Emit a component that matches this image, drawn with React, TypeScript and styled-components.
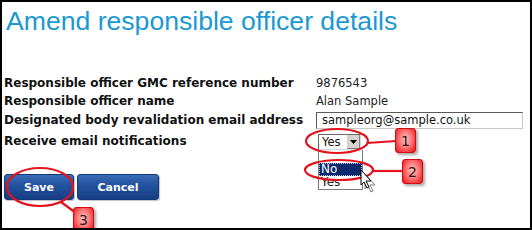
import React from 'react'
import styled, { createGlobalStyle } from 'styled-components'

const GlobalStyle = createGlobalStyle`
	html, body {
		margin: 0;
		padding: 0;
		background: #fff;
	}
	body {
		font-family: 'DejaVu Sans', Verdana, sans-serif;
	}
`

const Frame = styled.div`
	position: relative;
	width: 532px;
	height: 230px;
	box-sizing: border-box;
	border: 2px solid #000;
	overflow: hidden;
	background: #fff;
`

const Title = styled.h1`
	margin: 0;
	padding: 4px 0 0 4px;
	font-family: 'Liberation Sans', Arial, sans-serif;
	font-weight: normal;
	font-size: 26.6px;
	line-height: 30px;
	color: #1c98d4;
`

const Form = styled.div`
	display: grid;
	grid-template-columns: 312px 207px;
	grid-template-rows: 17px 18px 21px 21px;
	align-items: center;
	margin-top: 39px;
	padding-left: 2px;
`

const Label = styled.div`
	font-weight: bold;
	font-size: 12px;
	line-height: 17px;
	color: #111;
	white-space: nowrap;
`

const Value = styled.div`
	font-size: 11.5px;
	line-height: 17px;
	color: #222;
`

const TextInput = styled.div`
	box-sizing: border-box;
	height: 17px;
	padding: 0 0 0 5px;
	border: 1px solid;
	border-color: #5a5a5a #c8c8c8 #c8c8c8 #5a5a5a;
	font-size: 11.5px;
	line-height: 15px;
	color: #111;
`

const SelectWrap = styled.div`
	position: relative;
	margin-left: 2px;
	width: 43px;
`

const SelectBox = styled.div`
	box-sizing: border-box;
	display: flex;
	align-items: stretch;
	height: 16px;
	border: 1px solid;
	border-color: #6a6a6a #d8d8d8 #d8d8d8 #6a6a6a;
	background: #fff;
`

const SelectText = styled.span`
	flex: 1;
	padding-left: 3px;
	font-size: 11.5px;
	line-height: 14px;
	color: #111;
`

const ArrowButton = styled.span`
	width: 13px;
	display: flex;
	align-items: center;
	justify-content: center;
	background: #d6d3cc;
	border-left: 1px solid #fff;
	box-shadow: inset -1px -1px 0 #808080;
`

const ListBox = styled.div`
	position: absolute;
	top: 16px;
	left: 0;
	width: 45px;
	box-sizing: border-box;
	border: 1px solid #7a7a7a;
	border-top: 0;
	background: #fff;
	padding-top: 13px;
`

const Option = styled.div<{ $active?: boolean }>`
	box-sizing: border-box;
	height: 13px;
	padding-left: 2px;
	font-size: 12px;
	line-height: 12px;
	color: ${(p) => (p.$active ? '#fff' : '#222')};
	background: ${(p) => (p.$active ? '#0b2a6e' : 'transparent')};
	outline: ${(p) => (p.$active ? '1px dotted #b9c4e0' : 'none')};
	outline-offset: -1px;
`

const Actions = styled.div`
	display: flex;
	gap: 3px;
	margin-top: 22px;
	padding-left: 2px;
`

const Button = styled.button<{ $width: number }>`
	width: ${(p) => p.$width}px;
	height: 26px;
	border: 1px solid #123a7a;
	border-radius: 3px;
	background: linear-gradient(#3a6bb6 0%, #21519d 45%, #173f86 100%);
	color: #fff;
	font-family: 'DejaVu Sans', Verdana, sans-serif;
	font-weight: bold;
	font-size: 11px;
	padding: 0;
	box-shadow: 1px 1px 1px rgba(0, 0, 0, 0.25);
`

const Overlay = styled.div`
	position: absolute;
	top: -2px;
	left: -2px;
	width: 532px;
	height: 230px;
	pointer-events: none;
`

const Marks = styled.svg`
	position: absolute;
	top: 0;
	left: 0;
`

const Badge = styled.div<{ $x: number; $y: number }>`
	position: absolute;
	left: ${(p) => p.$x}px;
	top: ${(p) => p.$y}px;
	width: 21px;
	height: 25px;
	box-sizing: border-box;
	border: 1px solid #d20a12;
	border-radius: 3px;
	background: radial-gradient(ellipse at 50% 45%, #ffc2c2 0%, #ff7a7a 45%, #ee2a2f 85%, #e01219 100%);
	box-shadow: 2px 2px 3px rgba(0, 0, 0, 0.35);
	display: flex;
	align-items: center;
	justify-content: center;
	font-family: 'DejaVu Sans', Verdana, sans-serif;
	font-size: 14px;
	color: #2a1a1a;
`

const Callouts = () => (
	<Overlay>
		<Marks width={532} height={230} viewBox="0 0 532 230">
			<g fill="none" stroke="#e3121c" strokeWidth={2.2}>
				<ellipse cx={337} cy={141} rx={31} ry={12} />
				<path d="M367 143 L396 141" />
				<ellipse cx={339} cy={170} rx={34} ry={10} />
				<path d="M372 171 L403 171" />
				<ellipse cx={40} cy={187} rx={33} ry={19} />
				<path d="M61 202 L76 213" />
			</g>
			<g stroke="#000" strokeWidth={1} strokeLinejoin="round">
				<path d="M365 174 L365 189 L368 186 L371 192 L373 191 L370 185 L375 185 Z" fill="#fff" opacity={0.5} />
				<path d="M361 170 L361 185 L364 182 L367 188 L369 187 L366 181 L371 181 Z" fill="#fff" />
			</g>
		</Marks>
		<Badge $x={395} $y={128}>1</Badge>
		<Badge $x={402} $y={159}>2</Badge>
		<Badge $x={73} $y={207}>3</Badge>
	</Overlay>
)

export default function App() {
	return (
		<>
			<GlobalStyle />
			<Frame>
				<Title>Amend responsible officer details</Title>
				<Form>
					<Label>Responsible officer GMC reference number</Label>
					<Value>9876543</Value>
					<Label>Responsible officer name</Label>
					<Value>Alan Sample</Value>
					<Label>Designated body revalidation email address</Label>
					<TextInput>sampleorg@sample.co.uk</TextInput>
					<Label>Receive email notifications</Label>
					<SelectWrap>
						<SelectBox>
							<SelectText>Yes</SelectText>
							<ArrowButton>
								<svg width="7" height="4" viewBox="0 0 7 4">
									<path d="M0 0 L7 0 L3.5 4 Z" fill="#000" />
								</svg>
							</ArrowButton>
						</SelectBox>
						<ListBox>
							<Option $active>No</Option>
							<Option>Yes</Option>
						</ListBox>
					</SelectWrap>
				</Form>
				<Actions>
					<Button $width={70}>Save</Button>
					<Button $width={82}>Cancel</Button>
				</Actions>
				<Callouts />
			</Frame>
		</>
	)
}
